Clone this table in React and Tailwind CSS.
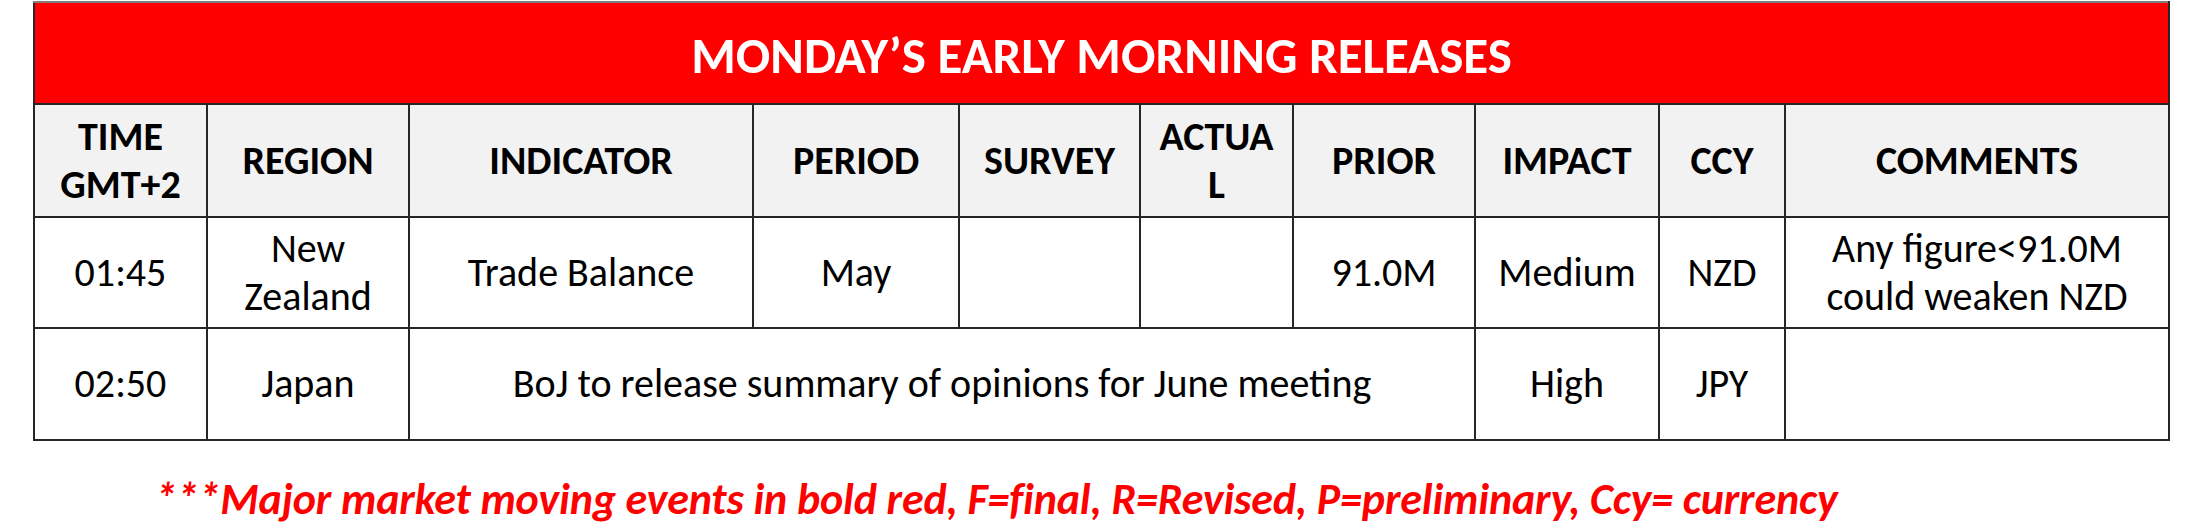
const cols = [173, 202, 344, 206, 181, 153, 182, 184, 126, 384]

const heads = [
  ['TIME', 'GMT+2'],
  ['REGION'],
  ['INDICATOR'],
  ['PERIOD'],
  ['SURVEY'],
  ['ACTUA', 'L'],
  ['PRIOR'],
  ['IMPACT'],
  ['CCY'],
  ['COMMENTS'],
]

function Lines({ lines }) {
  return lines.map((l, i) => (
    <div key={i} className="whitespace-nowrap">
      {l}
    </div>
  ))
}

const cell = 'border-2 border-[#262626] text-center align-middle p-0'

export default function App() {
  return (
    <div className="w-[2209px] h-[523px] bg-white pt-px font-['Carlito','Lato',sans-serif] text-black">
      <table className="ml-[33px] w-[2137px] table-fixed border-collapse">
        <colgroup>
          {cols.map((w, i) => (
            <col key={i} style={{ width: w }} />
          ))}
        </colgroup>
        <tbody>
          <tr className="h-[102px]">
            <td colSpan={10} className="border-2 border-[#262626] border-t-[#7f7f7f] bg-[#ff0000] text-center align-middle text-[51px] font-bold text-white leading-none pt-1">
              MONDAY’S EARLY MORNING RELEASES
            </td>
          </tr>
          <tr className="h-[113px] bg-[#f2f2f2] text-[40px] font-bold leading-[48px]">
            {heads.map((h, i) => (
              <td key={i} className={cell}>
                <Lines lines={h} />
              </td>
            ))}
          </tr>
          <tr className="h-[111px] text-[40px] leading-[48px]">
            <td className={cell}>01:45</td>
            <td className={cell}>
              <Lines lines={['New', 'Zealand']} />
            </td>
            <td className={cell}>Trade Balance</td>
            <td className={cell}>May</td>
            <td className={cell}></td>
            <td className={cell}></td>
            <td className={cell}>91.0M</td>
            <td className={cell}>Medium</td>
            <td className={cell}>NZD</td>
            <td className={cell}>
              <Lines lines={['Any figure<91.0M', 'could weaken NZD']} />
            </td>
          </tr>
          <tr className="h-[112px] text-[40px] leading-[48px]">
            <td className={cell}>02:50</td>
            <td className={cell}>Japan</td>
            <td colSpan={5} className={cell}>
              BoJ to release summary of opinions for June meeting
            </td>
            <td className={cell}>High</td>
            <td className={cell}>JPY</td>
            <td className={cell}></td>
          </tr>
        </tbody>
      </table>
      <p className="mt-[36px] pl-[155px] text-[44px] leading-[44px] font-bold italic tracking-[-0.15px] text-[#ff0000] whitespace-nowrap">
        ***Major market moving events in bold red, F=final, R=Revised, P=preliminary, Ccy= currency
      </p>
    </div>
  )
}
